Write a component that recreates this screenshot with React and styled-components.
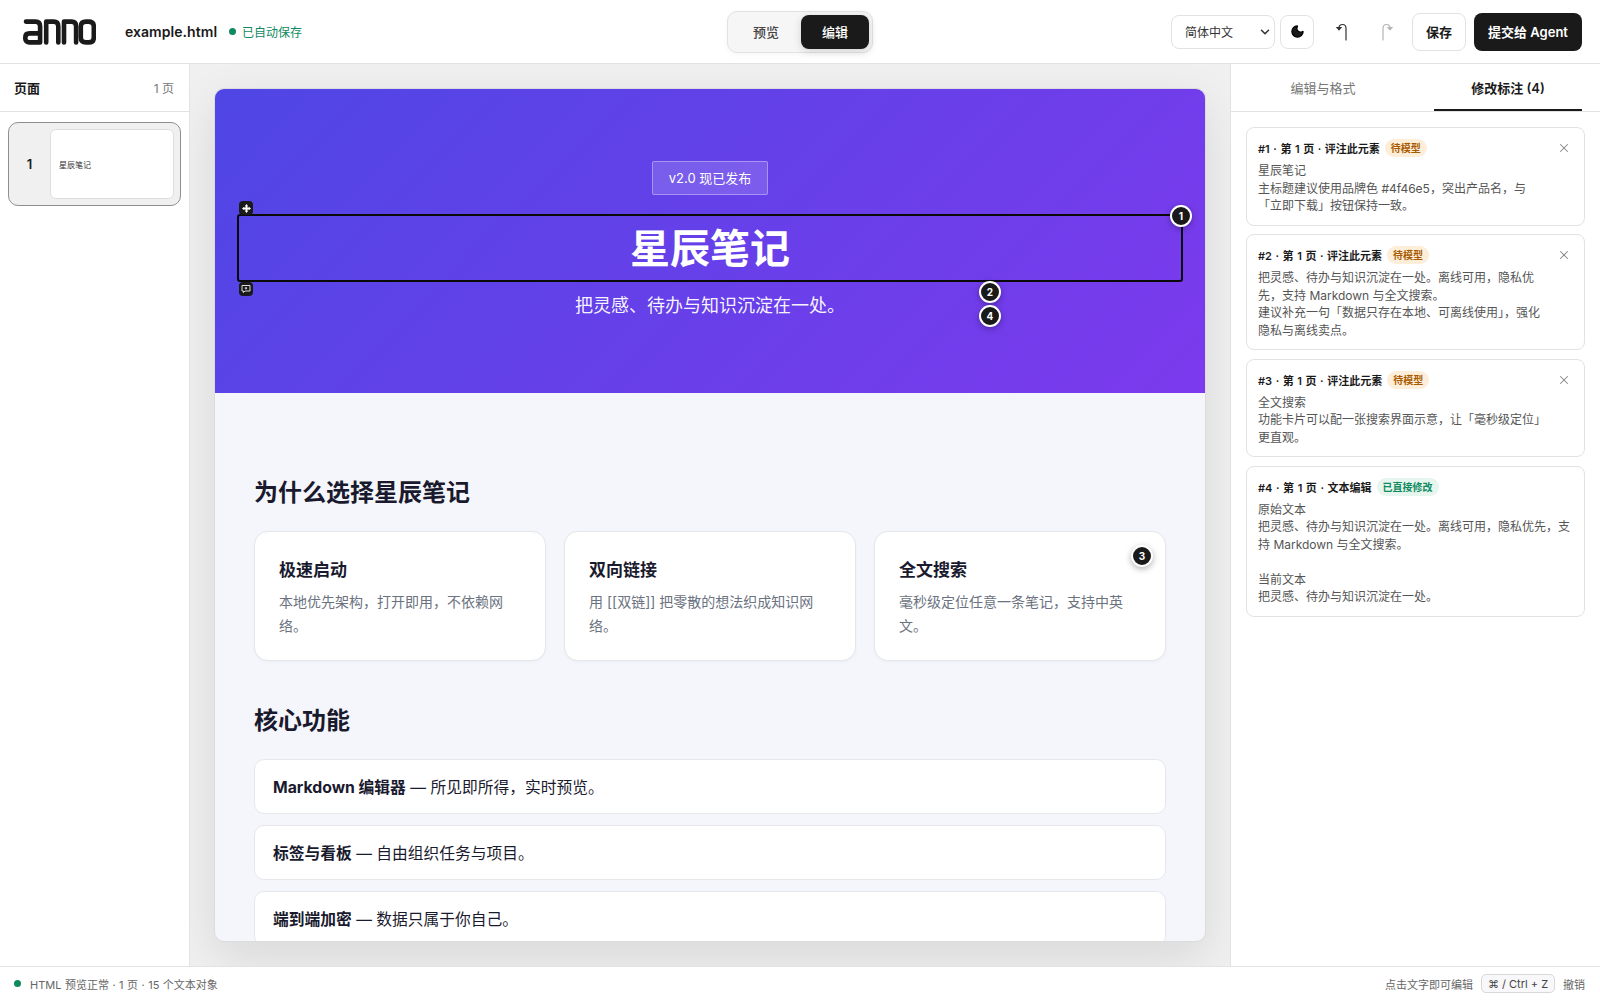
import styled, { createGlobalStyle } from "styled-components";
import { ChevronDown, X, Moon } from "lucide-react";

const sans = `Inter, "Noto Sans CJK SC", sans-serif`;

const annotations = [
  {
    id: 1,
    title: "#1 · 第 1 页 · 评注此元素",
    status: "待模型",
    lines: ["星辰笔记", "主标题建议使用品牌色 #4f46e5，突出产品名，与「立即下载」按钮保持一致。"],
  },
  {
    id: 2,
    title: "#2 · 第 1 页 · 评注此元素",
    status: "待模型",
    lines: [
      "把灵感、待办与知识沉淀在一处。离线可用，隐私优先，支持 Markdown 与全文搜索。",
      "建议补充一句「数据只存在本地、可离线使用」，强化隐私与离线卖点。",
    ],
  },
  {
    id: 3,
    title: "#3 · 第 1 页 · 评注此元素",
    status: "待模型",
    lines: ["全文搜索", "功能卡片可以配一张搜索界面示意，让「毫秒级定位」更直观。"],
  },
  {
    id: 4,
    title: "#4 · 第 1 页 · 文本编辑",
    status: "已直接修改",
    done: true,
    lines: [
      "原始文本",
      "把灵感、待办与知识沉淀在一处。离线可用，隐私优先，支持 Markdown 与全文搜索。",
      "",
      "当前文本",
      "把灵感、待办与知识沉淀在一处。",
    ],
  },
];

const reasons = [
  { title: "极速启动", text: "本地优先架构，打开即用，不依赖网络。" },
  { title: "双向链接", text: "用 [[双链]] 把零散的想法织成知识网络。" },
  { title: "全文搜索", text: "毫秒级定位任意一条笔记，支持中英文。", marker: 3 },
];

const features = [
  { name: "Markdown 编辑器", text: " — 所见即所得，实时预览。" },
  { name: "标签与看板", text: " — 自由组织任务与项目。" },
  { name: "端到端加密", text: " — 数据只属于你自己。" },
];

function Logo() {
  return (
    <LogoSvg viewBox="0 0 73 26" aria-label="anno">
      <g fill="none" stroke="#1a1a1a" strokeWidth="4.6" strokeLinecap="round" strokeLinejoin="round">
        <path d="M3 2.6h9.5c3 0 4.6 1.6 4.6 4.6v16.2H6.5c-2.6 0-4.2-1.6-4.2-4v-1c0-2.5 1.6-4 4.2-4h10.6" />
        <path d="M23.2 23.4V2.6h7.5c3 0 4.6 1.6 4.6 4.6v16.2" />
        <path d="M41 23.4V2.6h7.5c3 0 4.6 1.6 4.6 4.6v16.2" />
        <path d="M63 2.6h2.6c3.6 0 5.2 1.6 5.2 4.8v11.2c0 3.2-1.6 4.8-5.2 4.8H63c-3.6 0-5.2-1.6-5.2-4.8V7.4c0-3.2 1.6-4.8 5.2-4.8z" />
      </g>
    </LogoSvg>
  );
}

function HookIcon({ flip }) {
  return (
    <HookSvg viewBox="0 0 16 20" $flip={flip}>
      <path d="M12 18V6.5C12 3.8 10.6 2.5 8.6 2.5S5 3.6 5 5.6" fill="none" stroke="currentColor" strokeWidth="1.2" strokeLinecap="round" />
      <path d="M1.8 5h6.4L5 8.8z" fill="currentColor" />
    </HookSvg>
  );
}

export default function App() {
  return (
    <Shell>
      <GlobalStyle />
      <TopBar>
        <Brand>
          <Logo />
          <FileName>example.html</FileName>
          <SaveState>
            <Dot />
            已自动保存
          </SaveState>
        </Brand>
        <ModeSwitch>
          <ModeButton>预览</ModeButton>
          <ModeButton $active>编辑</ModeButton>
        </ModeSwitch>
        <Actions>
          <LangSelect>
            简体中文
            <ChevronDown size={14} strokeWidth={2.6} />
          </LangSelect>
          <ThemeButton>
            <Moon size={15} fill="#1a1a1a" strokeWidth={2} />
          </ThemeButton>
          <HistoryButton>
            <HookIcon />
          </HistoryButton>
          <HistoryButton $disabled>
            <HookIcon flip />
          </HistoryButton>
          <SaveButton>保存</SaveButton>
          <SubmitButton>提交给 Agent</SubmitButton>
        </Actions>
      </TopBar>

      <Workspace>
        <PagesPanel>
          <PagesHeader>
            <PagesTitle>页面</PagesTitle>
            <PagesCount>1 页</PagesCount>
          </PagesHeader>
          <PageThumb>
            <PageNumber>1</PageNumber>
            <ThumbPreview>星辰笔记</ThumbPreview>
          </PageThumb>
        </PagesPanel>

        <Canvas>
          <Sheet>
            <Hero>
              <HeroBadge>v2.0 现已发布</HeroBadge>
              <HeroTitle>
                星辰笔记
                <MoveHandle>
                  <svg width="9" height="9" viewBox="0 0 8 8">
                    <path d="M4 0l1.5 1.9H4.8v1.3h1.3v-.7L8 4 6.1 5.5v-.7H4.8v1.3h.7L4 8 2.5 6.1h.7V4.8H1.9v.7L0 4l1.9-1.5v.7h1.3V1.9h-.7z" fill="#fff" />
                  </svg>
                </MoveHandle>
                <CommentHandle>
                  <svg width="10" height="10" viewBox="0 0 10 10" fill="none" stroke="#ddd" strokeWidth="1">
                    <path d="M1 1.5h8v5.5H4L2.4 8.6V7H1z" />
                    <path d="M5 3v2.4M3.8 4.2h2.4" />
                  </svg>
                </CommentHandle>
              </HeroTitle>
              <HeroSub>把灵感、待办与知识沉淀在一处。</HeroSub>
              <Marker $top={116} $left={955}>1</Marker>
              <Marker $top={192} $left={764}>2</Marker>
              <Marker $top={216} $left={764}>4</Marker>
            </Hero>
            <SheetBody>
              <SectionTitle>为什么选择星辰笔记</SectionTitle>
              <ReasonGrid>
                {reasons.map((r) => (
                  <ReasonCard key={r.title}>
                    <ReasonTitle>{r.title}</ReasonTitle>
                    <ReasonText>{r.text}</ReasonText>
                    {r.marker && <CardMarker>{r.marker}</CardMarker>}
                  </ReasonCard>
                ))}
              </ReasonGrid>
              <SectionTitle $spaced>核心功能</SectionTitle>
              <FeatureList>
                {features.map((f) => (
                  <FeatureRow key={f.name}>
                    <strong>{f.name}</strong>
                    {f.text}
                  </FeatureRow>
                ))}
              </FeatureList>
            </SheetBody>
          </Sheet>
        </Canvas>

        <SidePanel>
          <Tabs>
            <Tab $w={184}>编辑与格式</Tab>
            <Tab $w={148} $active>修改标注 (4)</Tab>
          </Tabs>
          <NoteList>
            {annotations.map((a) => (
              <NoteCard key={a.id}>
                <NoteHead>
                  <NoteTitle>{a.title}</NoteTitle>
                  <StatusPill $done={a.done}>{a.status}</StatusPill>
                  {!a.done && (
                    <CloseButton>
                      <X size={14} strokeWidth={1.8} />
                    </CloseButton>
                  )}
                </NoteHead>
                <NoteBody $wide={a.done}>
                  {a.lines.map((line, i) => (
                    <NoteLine key={i}>{line || "\u00a0"}</NoteLine>
                  ))}
                </NoteBody>
              </NoteCard>
            ))}
          </NoteList>
        </SidePanel>
      </Workspace>

      <StatusBar>
        <StatusLeft>
          <Dot />
          HTML 预览正常 · 1 页 · 15 个文本对象
        </StatusLeft>
        <StatusRight>
          点击文字即可编辑
          <Kbd>⌘ / Ctrl + Z</Kbd>
          撤销
        </StatusRight>
      </StatusBar>
    </Shell>
  );
}

const GlobalStyle = createGlobalStyle`
  html, body, #root {
    margin: 0;
    height: 100%;
  }
  body {
    font-family: ${sans};
    color: #1a1a1a;
    background: #fff;
    overflow: hidden;
  }
  * {
    box-sizing: border-box;
  }
`;

const Shell = styled.div`
  display: flex;
  flex-direction: column;
  height: 1000px;
`;

const TopBar = styled.header`
  position: relative;
  flex: 0 0 64px;
  display: flex;
  align-items: center;
  justify-content: space-between;
  padding: 0 18px 0 23px;
  border-bottom: 1px solid #e2e2e2;
`;

const Brand = styled.div`
  display: flex;
  align-items: center;
`;

const LogoSvg = styled.svg`
  width: 73px;
  height: 26px;
  margin-right: 29px;
`;

const FileName = styled.span`
  font-size: 14px;
  font-weight: 600;
  letter-spacing: 0.05px;
  margin-right: 12px;
`;

const Dot = styled.i`
  display: inline-block;
  width: 7px;
  height: 7px;
  border-radius: 50%;
  background: #0f8a5f;
`;

const SaveState = styled.span`
  display: flex;
  align-items: center;
  gap: 6px;
  font-size: 12px;
  color: #0f8a5f;
`;

const ModeSwitch = styled.div`
  position: absolute;
  left: 727px;
  top: 11px;
  display: flex;
  height: 42px;
  padding: 3px;
  background: #f6f6f6;
  border: 1px solid #e2e2e2;
  border-radius: 10px;
  box-shadow: 0 2px 6px rgba(0, 0, 0, 0.04);
`;

const ModeButton = styled.button`
  width: ${(p) => (p.$active ? "68px" : "70px")};
  padding: 0 0 2px;
  border: 0;
  border-radius: 8px;
  font: 500 13px ${sans};
  color: ${(p) => (p.$active ? "#fff" : "#444")};
  background: ${(p) => (p.$active ? "#1a1a1a" : "transparent")};
  box-shadow: ${(p) => (p.$active ? "0 2px 8px rgba(0,0,0,.15)" : "none")};
`;

const Actions = styled.div`
  display: flex;
  align-items: center;
`;

const LangSelect = styled.div`
  display: flex;
  align-items: center;
  justify-content: space-between;
  width: 104px;
  height: 34px;
  padding: 0 2px 0 13px;
  border: 1px solid #e2e2e2;
  border-radius: 8px;
  font-size: 12px;
  color: #333;
`;

const ThemeButton = styled.button`
  display: flex;
  align-items: center;
  justify-content: center;
  width: 34px;
  height: 34px;
  margin: 0 5px 0 5px;
  padding: 0;
  background: #fff;
  border: 1px solid #e2e2e2;
  border-radius: 8px;
`;

const HistoryButton = styled.button`
  display: flex;
  align-items: center;
  justify-content: center;
  width: 45px;
  height: 34px;
  padding: 0;
  border: 0;
  background: none;
  color: ${(p) => (p.$disabled ? "#b5b5b5" : "#333")};
`;

const HookSvg = styled.svg`
  width: 16px;
  height: 20px;
  transform: ${(p) => (p.$flip ? "scaleX(-1)" : "none")};
`;

const SaveButton = styled.button`
  height: 38px;
  width: 54px;
  margin-left: 3px;
  background: #fff;
  border: 1px solid #e2e2e2;
  border-radius: 8px;
  font: 600 13px ${sans};
  color: #1a1a1a;
`;

const SubmitButton = styled.button`
  height: 38px;
  width: 108px;
  margin-left: 8px;
  padding: 0;
  background: #1a1a1a;
  border: 0;
  border-radius: 8px;
  font: 600 13px ${sans};
  color: #fff;
`;

const Workspace = styled.div`
  flex: 1;
  display: flex;
  min-height: 0;
`;

const PagesPanel = styled.aside`
  flex: 0 0 190px;
  border-right: 1px solid #e2e2e2;
  background: #fff;
`;

const PagesHeader = styled.div`
  display: flex;
  align-items: center;
  justify-content: space-between;
  height: 48px;
  padding: 0 15px 0 14px;
  border-bottom: 1px solid #e2e2e2;
`;

const PagesTitle = styled.span`
  font-size: 13px;
  font-weight: 600;
`;

const PagesCount = styled.span`
  font-size: 12px;
  color: #777;
`;

const PageThumb = styled.div`
  display: flex;
  align-items: center;
  height: 84px;
  margin: 10px 8px;
  padding: 6px 6px 6px 0;
  background: #f0f0f0;
  border: 1px solid #8f8f8f;
  border-radius: 10px;
`;

const PageNumber = styled.span`
  flex: 0 0 41px;
  text-align: center;
  font-size: 13px;
  font-weight: 600;
`;

const ThumbPreview = styled.div`
  flex: 1;
  align-self: stretch;
  display: flex;
  align-items: center;
  padding-left: 8px;
  background: #fff;
  border: 1px solid #dedede;
  border-radius: 6px;
  font-size: 8px;
  color: #333;
`;

const Canvas = styled.main`
  flex: 1;
  min-width: 0;
  padding: 24px;
  background: #f0f0f0;
  overflow: hidden;
`;

const Sheet = styled.div`
  height: 100%;
  background: #f5f6fb;
  border: 1px solid #dcdcdc;
  border-radius: 10px;
  overflow: hidden;
  box-shadow: 0 16px 48px rgba(0, 0, 0, 0.1);
`;

const Hero = styled.section`
  position: relative;
  display: flex;
  flex-direction: column;
  align-items: center;
  padding: 72px 22px 73px;
  color: #fff;
  background: linear-gradient(135deg, #4f46e5, #7c3aed);
`;

const HeroBadge = styled.span`
  display: flex;
  align-items: center;
  justify-content: center;
  width: 116px;
  height: 34px;
  padding-bottom: 1px;
  font-size: 13px;
  font-weight: 400;
  background: rgba(255, 255, 255, 0.15);
  border: 1px solid rgba(255, 255, 255, 0.35);
  border-radius: 2px;
`;

const HeroTitle = styled.h1`
  position: relative;
  align-self: stretch;
  height: 68px;
  margin: 19px 0 9px;
  border: 2px solid #0a0a0a;
  border-radius: 3px;
  font-size: 40px;
  font-weight: 700;
  line-height: 65px;
  text-align: center;
`;

const handle = `
  position: absolute;
  left: 0;
  display: flex;
  align-items: center;
  justify-content: center;
  width: 14px;
  height: 14px;
  background: #1a1a1a;
  border-radius: 4px;
`;

const MoveHandle = styled.span`
  ${handle}
  top: -15px;
`;

const CommentHandle = styled.span`
  ${handle}
  bottom: -16px;
`;

const HeroSub = styled.p`
  margin: 0;
  font-size: 18px;
  line-height: 29px;
  color: rgba(255, 255, 255, 0.95);
`;

const markerStyle = `
  position: absolute;
  display: flex;
  align-items: center;
  justify-content: center;
  width: 22px;
  height: 22px;
  font-size: 10px;
  font-weight: 700;
  color: #fff;
  background: #1a1a1a;
  border: 2px solid #fff;
  border-radius: 50%;
  box-shadow: 0 2px 6px rgba(0, 0, 0, 0.3);
`;

const Marker = styled.span`
  ${markerStyle}
  top: ${(p) => p.$top}px;
  left: ${(p) => p.$left}px;
`;

const CardMarker = styled.span`
  ${markerStyle}
  top: 13px;
  right: 12px;
`;

const SheetBody = styled.div`
  padding: 83px 39px 0;
`;

const SectionTitle = styled.h2`
  margin: ${(p) => (p.$spaced ? "43px 0 21px" : "0 0 21px")};
  font-size: 24px;
  font-weight: 700;
  line-height: 34px;
  color: #1a1a2e;
`;

const ReasonGrid = styled.div`
  display: grid;
  grid-template-columns: repeat(3, 1fr);
  gap: 18px;
`;

const ReasonCard = styled.div`
  position: relative;
  height: 130px;
  padding: 26px 24px 0;
  background: #fff;
  border: 1px solid #e5e7eb;
  border-radius: 14px;
  box-shadow: 0 1px 3px rgba(0, 0, 0, 0.04);
`;

const ReasonTitle = styled.h3`
  margin: 0 0 8px;
  font-size: 17px;
  font-weight: 700;
  line-height: 24px;
  color: #1a1a2e;
`;

const ReasonText = styled.p`
  margin: 0;
  font-size: 14px;
  line-height: 23.5px;
  color: #6b7280;
`;

const FeatureList = styled.div`
  display: flex;
  flex-direction: column;
  gap: 11px;
`;

const FeatureRow = styled.div`
  display: flex;
  align-items: center;
  white-space: pre;
  height: 55px;
  padding: 0 18px;
  font-size: 15.75px;
  color: #1a1a2e;
  background: #fff;
  border: 1px solid #e5e7eb;
  border-radius: 10px;
`;

const SidePanel = styled.aside`
  flex: 0 0 370px;
  border-left: 1px solid #e2e2e2;
  background: #fff;
`;

const Tabs = styled.div`
  display: flex;
  justify-content: space-between;
  height: 48px;
  padding-right: 18px;
  border-bottom: 1px solid #e2e2e2;
`;

const Tab = styled.div`
  display: flex;
  align-items: center;
  justify-content: center;
  width: ${(p) => p.$w}px;
  padding-top: 2px;
  font-size: 13px;
  font-weight: ${(p) => (p.$active ? 600 : 400)};
  color: ${(p) => (p.$active ? "#1a1a1a" : "#777")};
  border-bottom: 2px solid ${(p) => (p.$active ? "#1a1a1a" : "transparent")};
`;

const NoteList = styled.div`
  display: flex;
  flex-direction: column;
  gap: 8.5px;
  padding: 15px;
`;

const NoteCard = styled.div`
  padding: 11px 11px 10px;
  border: 1px solid #e2e2e2;
  border-radius: 8px;
`;

const NoteHead = styled.div`
  display: flex;
  align-items: center;
  gap: 5px;
  height: 18px;
  margin-bottom: 5px;
`;

const NoteTitle = styled.span`
  font-size: 11px;
  font-weight: 600;
  word-spacing: 0.8px;
`;

const StatusPill = styled.span`
  height: 18px;
  padding: 0 6px;
  font-size: 10px;
  font-weight: 600;
  line-height: 18px;
  border-radius: 9px;
  color: ${(p) => (p.$done ? "#0f8a5f" : "#a85b00")};
  background: ${(p) => (p.$done ? "#e6f5ee" : "#fdeed9")};
`;

const CloseButton = styled.span`
  display: flex;
  margin-left: auto;
  margin-right: 2px;
  color: #888;
`;

const NoteBody = styled.div`
  max-width: ${(p) => (p.$wide ? "100%" : "288px")};
  font-size: 12px;
  line-height: 17.5px;
  color: #555;
`;

const NoteLine = styled.div``;

const StatusBar = styled.footer`
  flex: 0 0 34px;
  display: flex;
  align-items: center;
  justify-content: space-between;
  padding: 0 15px 0 14px;
  font-size: 11px;
  color: #666;
  background: #fff;
  border-top: 1px solid #e2e2e2;
`;

const StatusLeft = styled.div`
  display: flex;
  align-items: center;
  gap: 9px;
  word-spacing: 0.4px;
`;

const StatusRight = styled.div`
  display: flex;
  align-items: center;
  gap: 8px;
`;

const Kbd = styled.kbd`
  display: flex;
  align-items: center;
  justify-content: center;
  width: 74px;
  height: 19px;
  font: 11px ${sans};
  color: #444;
  background: #f8f8fa;
  border: 1px solid #d8d8d8;
  border-radius: 5px;
`;
